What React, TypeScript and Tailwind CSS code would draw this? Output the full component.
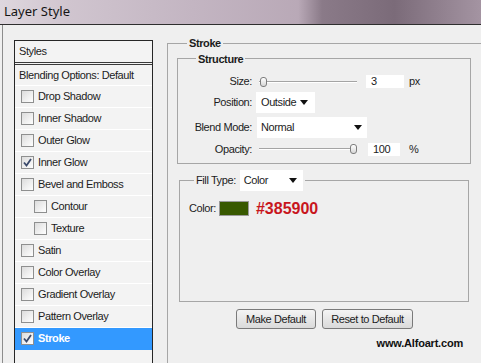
import React from "react"

type Row = { label: string; checked?: boolean; sub?: boolean; selected?: boolean }

const rows: Row[] = [
  { label: "Drop Shadow" },
  { label: "Inner Shadow" },
  { label: "Outer Glow" },
  { label: "Inner Glow", checked: true },
  { label: "Bevel and Emboss" },
  { label: "Contour", sub: true },
  { label: "Texture", sub: true },
  { label: "Satin" },
  { label: "Color Overlay" },
  { label: "Gradient Overlay" },
  { label: "Pattern Overlay" },
  { label: "Stroke", checked: true, selected: true },
]

function Checkbox({ checked }: { checked?: boolean }) {
  return (
    <span className="flex h-[13px] w-[13px] shrink-0 items-center justify-center border border-[#8e8f8f] bg-gradient-to-br from-[#dcdcdc] to-white">
      {checked && (
        <svg width="9" height="9" viewBox="0 0 9 9">
          <path d="M1 4.5 L3.5 7.5 L8 1" fill="none" stroke="#3b4a6b" strokeWidth="1.8" />
        </svg>
      )}
    </span>
  )
}

function Caret() {
  return (
    <svg width="8" height="5" viewBox="0 0 8 5" className="shrink-0">
      <polygon points="0,0 8,0 4,5" fill="#111" />
    </svg>
  )
}

function Slider({ end }: { end?: boolean }) {
  return (
    <div className="relative h-[12px] w-[98px]">
      <div className="absolute left-0 right-0 top-[5px] h-[2px] border-t border-b border-t-[#a4a4a4] border-b-white" />
      <div
        className={`absolute top-[1px] h-[10px] w-[7px] rounded-[3px] border border-[#7d7d7d] bg-gradient-to-b from-white to-[#d6d6d6] ${
          end ? "right-[0px]" : "left-[1px]"
        }`}
      />
    </div>
  )
}

function Field({ value, w }: { value: string; w: string }) {
  return <div className={`flex h-[13px] items-center bg-white pl-[5px] ${w}`}>{value}</div>
}

export default function App() {
  return (
    <div className="h-[363px] w-[481px] overflow-hidden bg-[#efefef] font-['Liberation_Sans',Arial,sans-serif] text-[11px] tracking-[-0.4px] text-[#1c1c1c]">
      <div className="flex h-[25px] items-center border-b border-[#2e2e2e] bg-[linear-gradient(90deg,#ded7de_0%,#d0c5cf_14%,#c3b5c2_40%,#b9a9b7_62%,#8a7a88_67%,#7b6b79_82%,#a494a2_100%)] pl-[4px] font-['Noto_Sans',sans-serif] text-[13px] tracking-normal text-[#151515]">
        Layer Style
      </div>

      <div className="ml-[2px] flex h-[338px] border-l border-[#8c8c8c] pl-[11px] pt-[15px]">
        {/* styles list */}
        <div className="h-[340px] w-[139px] shrink-0 border border-[#262626] bg-[#f3f3f3]">
          <div className="flex h-[21px] items-center pl-[4px]">Styles</div>
          <div className="h-[3px] border-y border-[#3a3a3a]" />
          <div className="flex h-[21px] items-center border-b border-white pl-[4px]">Blending Options: Default</div>
          {rows.map((r) => (
            <div
              key={r.label}
              className={`flex h-[22px] items-center gap-[4px] border-b ${
                r.selected ? "border-[#3399ff] bg-[#3399ff] font-bold text-white" : "border-white"
              } ${r.sub ? "pl-[19px]" : "pl-[6px]"}`}
            >
              <Checkbox checked={r.checked} />
              <span>{r.label}</span>
            </div>
          ))}
        </div>

        {/* stroke panel */}
        <fieldset className="ml-[14px] mt-[-5px] h-[400px] w-[330px] shrink-0 border border-[#a6a6a6] pl-[9px]">
          <legend className="ml-[10px] px-[2px] font-bold">Stroke</legend>

          <fieldset className="mt-[-1px] w-[294px] border border-[#a6a6a6] pb-[8px]">
            <legend className="ml-[18px] px-[2px] font-bold">Structure</legend>

            <div className="mt-[8px] flex h-[13px] items-center">
              <span className="w-[74px] text-right">Size:</span>
              <span className="ml-[7px]"><Slider /></span>
              <span className="ml-[9px]"><Field value="3" w="w-[38px]" /></span>
              <span className="ml-[5px]">px</span>
            </div>

            <div className="mt-[4px] flex h-[21px] items-center">
              <span className="w-[74px] text-right">Position:</span>
              <div className="ml-[4px] flex h-[21px] w-[59px] items-center justify-between bg-white pl-[5px] pr-[7px]">
                <span>Outside</span>
                <Caret />
              </div>
            </div>

            <div className="mt-[4px] flex h-[21px] items-center">
              <span className="w-[74px] text-right">Blend Mode:</span>
              <div className="ml-[5px] flex h-[21px] w-[110px] items-center justify-between bg-white pl-[4px] pr-[5px]">
                <span>Normal</span>
                <Caret />
              </div>
            </div>

            <div className="mt-[5px] flex h-[12px] items-center">
              <span className="w-[74px] text-right">Opacity:</span>
              <span className="ml-[7px]"><Slider end /></span>
              <span className="ml-[11px]"><Field value="100" w="w-[32px]" /></span>
              <span className="ml-[9px]">%</span>
            </div>
          </fieldset>

          <fieldset className="ml-[2px] mt-[6px] w-[290px] border border-[#a6a6a6]">
            <legend className="ml-[14px] flex items-center px-[2px]">
              <span>Fill Type:</span>
              <div className="ml-[4px] flex h-[21px] w-[63px] items-center justify-between bg-white pl-[4px] pr-[6px]">
                <span>Color</span>
                <Caret />
              </div>
            </legend>
            <div className="h-[110px] pl-[9px] pt-[10px]">
              <div className="flex h-[15px] items-center">
                <span>Color:</span>
                <span className="ml-[3px] h-[15px] w-[30px] border border-[#9a9a9a] bg-[#385900]" />
                <span className="ml-[7px] text-[16px] font-bold tracking-normal text-[#c8161d]">#385900</span>
              </div>
            </div>
          </fieldset>

          <div className="ml-[59px] mt-[7px] flex gap-[6px]">
            <button className="h-[20px] w-[80px] rounded-[3px] border border-[#7a7a7a] bg-gradient-to-b from-[#f4f4f4] to-[#dadada] text-[11px]">
              Make Default
            </button>
            <button className="h-[20px] w-[91px] rounded-[3px] border border-[#7a7a7a] bg-gradient-to-b from-[#f4f4f4] to-[#dadada] text-[11px]">
              Reset to Default
            </button>
          </div>

          <div className="mt-[6px] w-[293px] pr-[7px] text-right text-[11px] font-bold tracking-[-0.2px] text-[#111]">www.Alfoart.com</div>
        </fieldset>
      </div>
    </div>
  )
}
